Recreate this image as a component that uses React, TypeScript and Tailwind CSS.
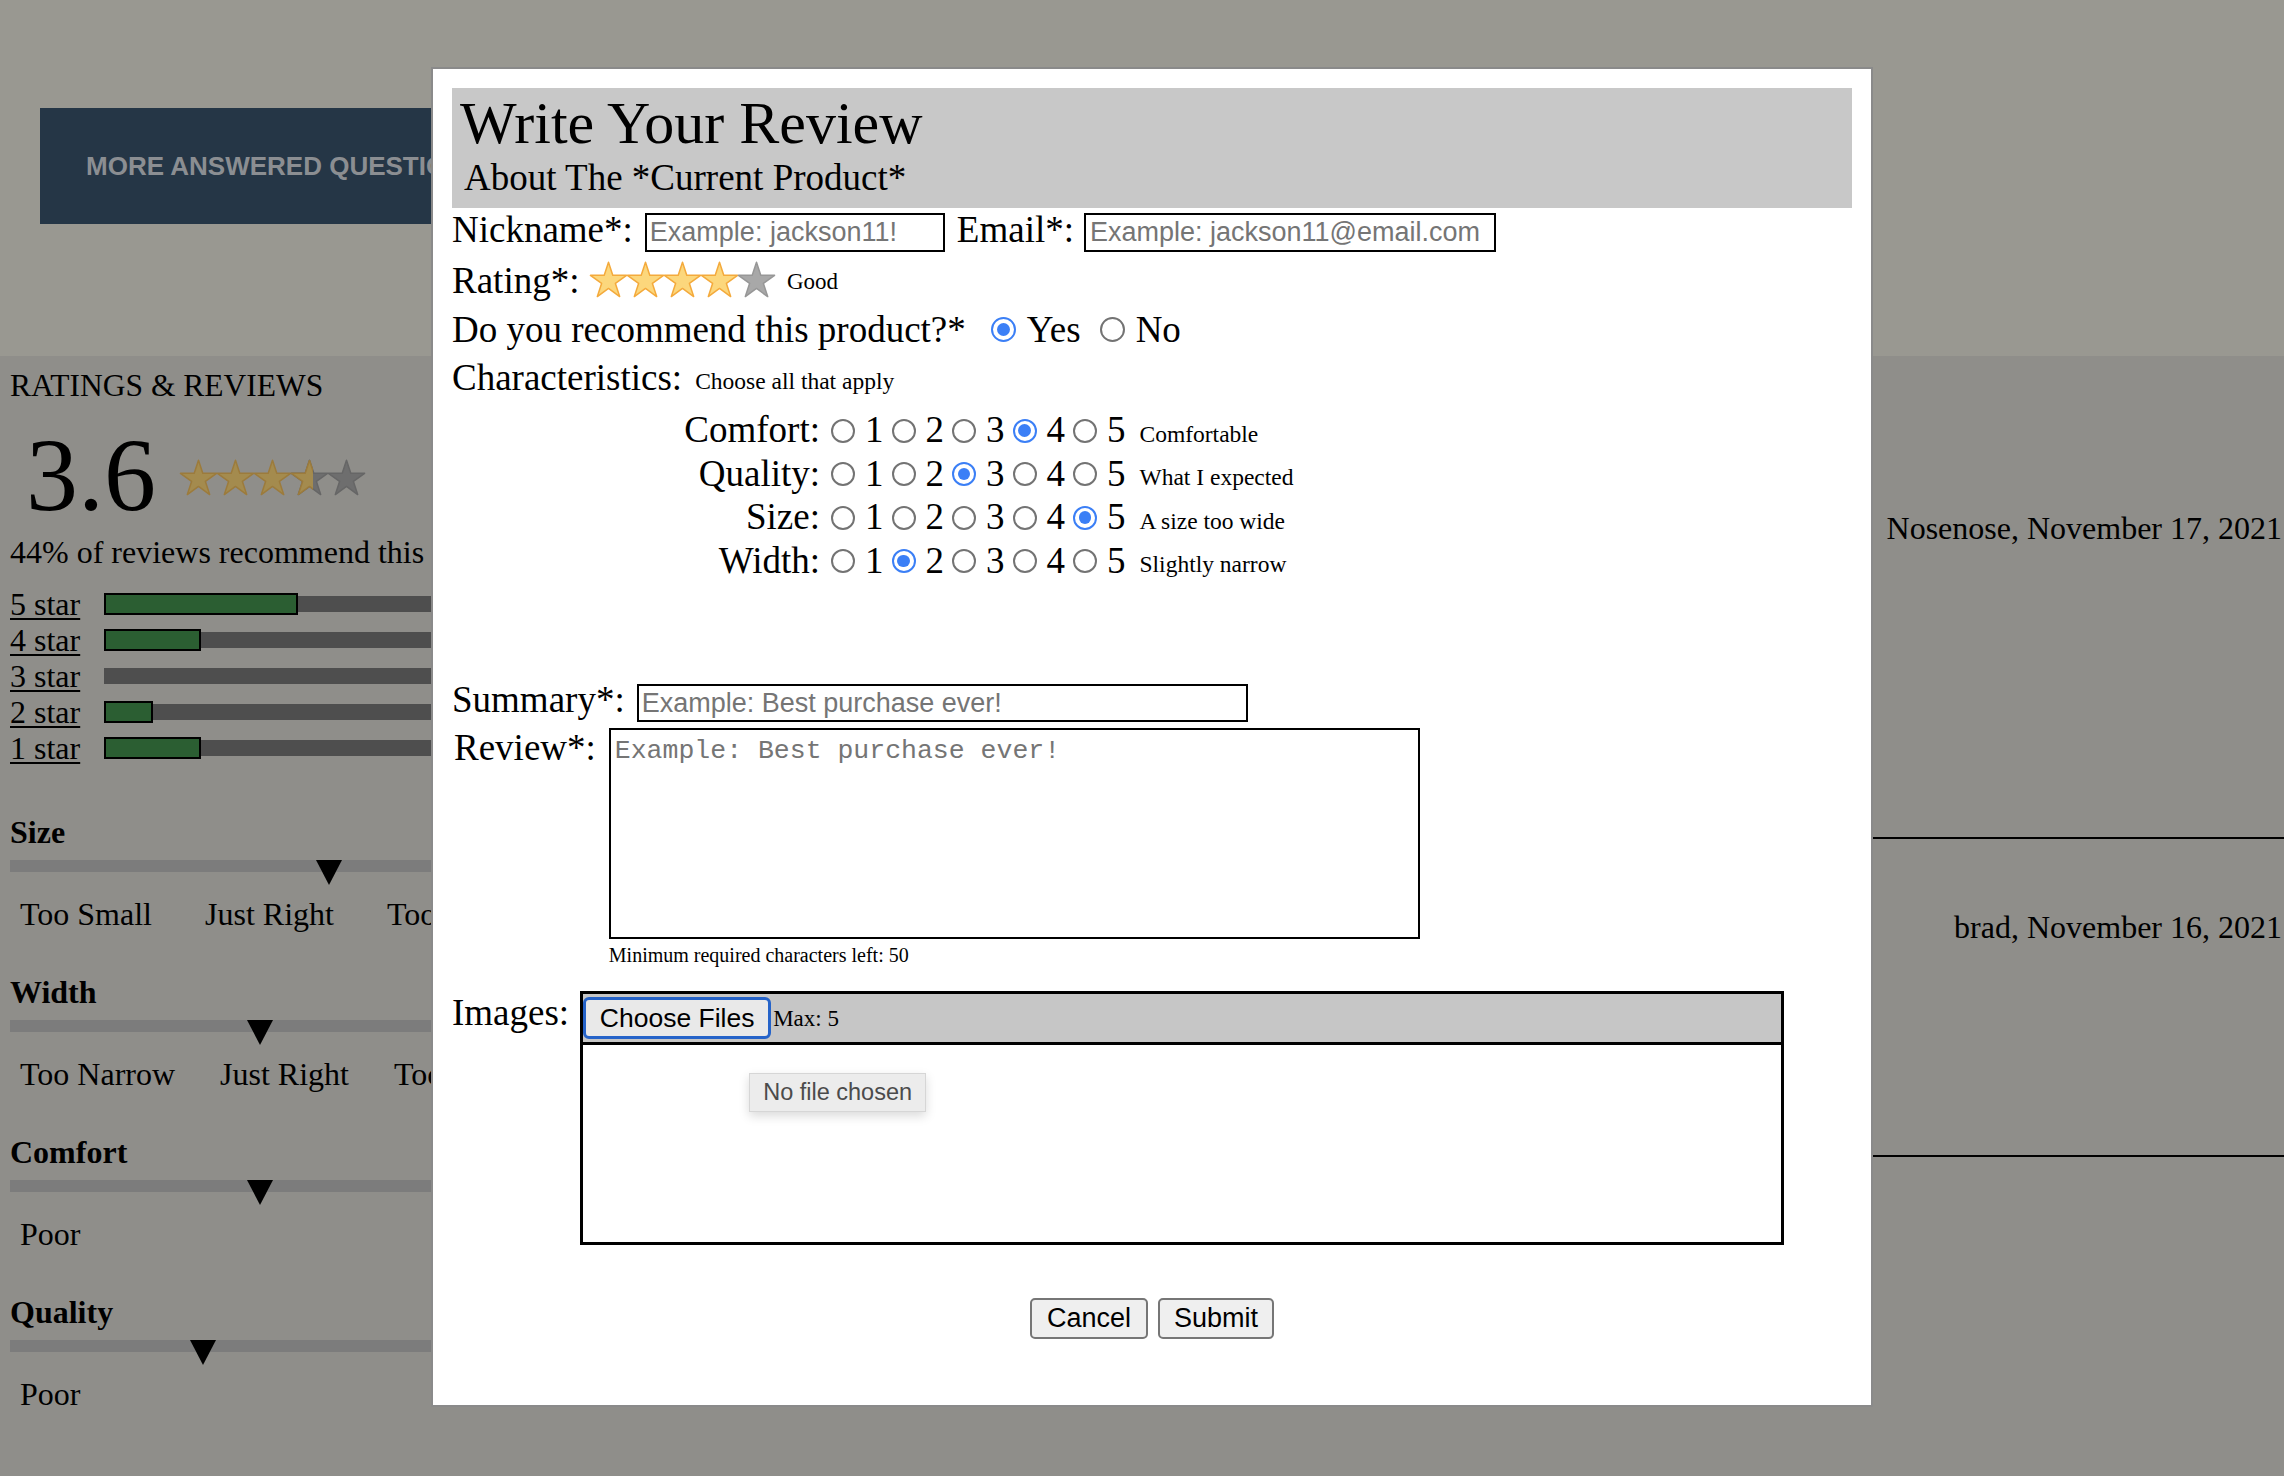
import React from 'react';

const ratingRows = [
  { label: '5 star', pct: 44.4 },
  { label: '4 star', pct: 22.2 },
  { label: '3 star', pct: 0 },
  { label: '2 star', pct: 11.1 },
  { label: '1 star', pct: 22.2 },
];

const fits = [
  { name: 'Size', pos: 306, labels: ['Too Small', 'Just Right', 'Too Large'], gap: 'gap-[53px]' },
  { name: 'Width', pos: 237, labels: ['Too Narrow', 'Just Right', 'Too Wide'], gap: 'gap-[45px]' },
  { name: 'Comfort', pos: 237, labels: ['Poor', 'Perfect'], gap: 'gap-[400px]' },
  { name: 'Quality', pos: 179.5, labels: ['Poor', 'Great'], gap: 'gap-[400px]' },
];

const characteristics = [
  { name: 'Comfort', value: 4, desc: 'Comfortable' },
  { name: 'Quality', value: 3, desc: 'What I expected' },
  { name: 'Size', value: 5, desc: 'A size too wide' },
  { name: 'Width', value: 2, desc: 'Slightly narrow' },
];

const STAR_POINTS =
  '18.5,0.2 22.77,13.33 36.57,13.33 25.4,21.44 29.67,34.57 18.5,26.46 7.33,34.57 11.6,21.44 0.43,13.33 14.23,13.33';

function Star({ fill, stroke }: { fill: string; stroke: string }) {
  return (
    <svg width="37" height="35" viewBox="0 0 37 35" className="block shrink-0 overflow-visible">
      <polygon points={STAR_POINTS} fill={fill} stroke={stroke} strokeWidth="1.5" strokeLinejoin="round" />
    </svg>
  );
}

function Radio({ checked, className }: { checked?: boolean; className: string }) {
  if (checked) {
    return (
      <span className={`flex shrink-0 items-center justify-center rounded-full border-[2.5px] border-[#3b7ff6] bg-white ${className}`}>
        <span className="h-[64%] w-[64%] rounded-full bg-[#3b7ff6]" />
      </span>
    );
  }
  return <span className={`block shrink-0 rounded-full border-2 border-[#737373] bg-white ${className}`} />;
}

function RatingsSummary() {
  return (
    <section className="w-[560px] shrink-0 pl-[10px] pt-[14px]">
      <h2 className="text-[31.5px] leading-none">RATINGS &amp; REVIEWS</h2>

      <div className="mt-[21.5px] flex items-start">
        <span className="ml-[16px] text-[104px] leading-none">3.6</span>
        <div className="ml-[24px] mt-[37px] flex">
          {[0, 1, 2].map((i) => (
            <Star key={i} fill="#a48b4e" stroke="#9c7b3c" />
          ))}
          <div className="relative h-[35px] w-[37px]">
            <Star fill="#6e6e6e" stroke="#666666" />
            <div className="absolute inset-y-0 left-0 overflow-hidden" style={{ width: '60%' }}>
              <Star fill="#a48b4e" stroke="#9c7b3c" />
            </div>
          </div>
          <Star fill="#6e6e6e" stroke="#666666" />
        </div>
      </div>

      <p className="mt-[9px] whitespace-nowrap text-[32px] leading-none">44% of reviews recommend this product</p>

      <div className="mt-[18px]">
        {ratingRows.map((row) => (
          <div key={row.label} className="flex h-[36px] items-center">
            <a className="w-[94px] text-[32px] leading-[36px] underline decoration-[2px] underline-offset-[3px]">
              {row.label}
            </a>
            <div className="relative flex h-[22px] w-[437px] items-center">
              <div className="h-[16px] w-full bg-[#4e4e4e]" />
              {row.pct > 0 && (
                <div
                  className="absolute left-0 top-0 h-[22px] border-2 border-black bg-[#2b5e32]"
                  style={{ width: `${row.pct}%` }}
                />
              )}
            </div>
          </div>
        ))}
      </div>

      <div className="mt-[50px]">
        {fits.map((f, i) => (
          <div key={f.name} className={i > 0 ? 'mt-[46px]' : ''}>
            <h3 className="text-[32px] font-bold leading-none">{f.name}</h3>
            <div className="relative mt-[12px] h-[25px] w-[540px]">
              <div className="mt-[11px] h-[12px] bg-[#7c7c7c]" />
              <svg
                width="26"
                height="25"
                viewBox="0 0 26 25"
                className="absolute top-0"
                style={{ left: f.pos }}
              >
                <polygon points="0,0 26,0 13,25" fill="#000" />
              </svg>
            </div>
            <div className={`mt-[13px] flex whitespace-nowrap pl-[10px] text-[32px] leading-none ${f.gap}`}>
              {f.labels.map((l) => (
                <span key={l}>{l}</span>
              ))}
            </div>
          </div>
        ))}
      </div>
    </section>
  );
}

function ReviewList() {
  return (
    <section className="min-w-0 flex-1 text-right text-[32px] leading-none">
      <div className="border-b-2 border-black pb-[293px] pr-[2px] pt-[156px]">Nosenose, November 17, 2021</div>
      <div className="border-b-2 border-black pb-[212px] pr-[2px] pt-[72px]">brad, November 16, 2021</div>
    </section>
  );
}

function ReviewModal() {
  return (
    <div className="absolute left-[431px] top-[67px] h-[1340px] w-[1442px] border-2 border-[#8a8a8a] bg-white px-[19px] pt-[19px]">
      {/* Header */}
      <div className="h-[120px] bg-[#c8c8c8]">
        <h1 className="pl-[8px] pt-[5px] text-[60px] font-normal leading-none">Write Your Review</h1>
        <h2 className="mt-[6px] pl-[12px] text-[37px] leading-none">About The *Current Product*</h2>
      </div>

      {/* Nickname / Email */}
      <div className="flex h-[54px] items-start text-[37px] leading-none">
        <label className="mt-[3px]">Nickname*:</label>
        <input
          placeholder="Example: jackson11!"
          className="ml-[12px] mt-[5px] h-[39px] w-[300px] border-2 border-black px-[3px] font-['Liberation_Sans',Arial,sans-serif] text-[27px] outline-none placeholder:text-[#757575]"
        />
        <label className="ml-[12px] mt-[3px]">Email*:</label>
        <input
          placeholder="Example: jackson11@email.com"
          className="ml-[10px] mt-[5px] h-[39px] w-[412px] border-2 border-black px-[4px] font-['Liberation_Sans',Arial,sans-serif] text-[27px] outline-none placeholder:text-[#757575]"
        />
      </div>

      {/* Rating */}
      <div className="flex h-[49px] items-start text-[37px] leading-none">
        <span>Rating*:</span>
        <div className="ml-[10.5px] flex">
          {[0, 1, 2, 3].map((i) => (
            <Star key={i} fill="#fcd77c" stroke="#f4aa3c" />
          ))}
          <Star fill="#a8a8a8" stroke="#979797" />
        </div>
        <span className="ml-[12px] mt-[8px] text-[23px]">Good</span>
      </div>

      {/* Recommend */}
      <div className="flex h-[48px] items-start text-[37px] leading-none">
        <span>Do you recommend this product?*</span>
        <Radio checked className="ml-[25px] mt-[6px] h-[25px] w-[25px]" />
        <span className="ml-[11px]">Yes</span>
        <Radio className="ml-[19px] mt-[6px] h-[25px] w-[25px]" />
        <span className="ml-[11px]">No</span>
      </div>

      {/* Characteristics */}
      <div className="flex h-[48.5px] items-start text-[37px] leading-none">
        <span>Characteristics:</span>
        <span className="ml-[13px] mt-[11px] text-[23.5px]">Choose all that apply</span>
      </div>

      <div>
        {characteristics.map((c) => (
          <div key={c.name} className="flex h-[43.5px] items-start text-[37px] leading-none">
            <span className="mt-[3.5px] w-[368px] text-right">{c.name}:</span>
            {[1, 2, 3, 4, 5].map((n) => (
              <div key={n} className={`flex items-start ${n === 1 ? 'ml-[11px]' : 'ml-[8px]'}`}>
                <Radio checked={n === c.value} className="mt-[11px] h-[24px] w-[24px]" />
                <span className="ml-[10px] mt-[3.5px]">{n}</span>
              </div>
            ))}
            <span className="ml-[14px] mt-[15px] text-[23.5px]">{c.desc}</span>
          </div>
        ))}
      </div>

      {/* Summary */}
      <div className="mt-[99.5px] flex h-[47px] items-start text-[37px] leading-none">
        <label>Summary*:</label>
        <input
          placeholder="Example: Best purchase ever!"
          className="ml-[12px] mt-[3px] h-[38px] w-[611px] border-2 border-black px-[3px] font-['Liberation_Sans',Arial,sans-serif] text-[27px] outline-none placeholder:text-[#757575]"
        />
      </div>

      {/* Review body */}
      <div className="flex items-start text-[37px] leading-none">
        <label className="ml-[2px] mt-[1px]">Review*:</label>
        <div className="ml-[13px]">
          <textarea
            placeholder="Example: Best purchase ever!"
            className="block h-[211px] w-[811px] resize-none border-2 border-black px-[4px] pt-[6px] font-['Liberation_Mono','Courier_New',monospace] text-[26.5px] leading-[30px] outline-none placeholder:text-[#757575]"
          />
          <p className="mt-[6px] text-[20px] leading-none">Minimum required characters left: 50</p>
        </div>
      </div>

      {/* Images */}
      <div className="mt-[26px] flex items-start text-[37px] leading-none">
        <span className="mt-[3px]">Images:</span>
        <div className="relative ml-[11px] h-[254px] w-[1204px] border-[3px] border-black">
          <div className="flex h-[51px] items-center border-b-[3px] border-black bg-[#c6c6c6]">
            <button className="h-[42px] w-[188px] rounded-[6px] border-[3px] border-[#2563c9] bg-[#e9e9e9] font-['Liberation_Sans',Arial,sans-serif] text-[26.5px] leading-none text-black">
              Choose Files
            </button>
            <span className="ml-[2px] text-[23px]">Max: 5</span>
          </div>
          <div className="absolute left-[166px] top-[79px] flex h-[39px] w-[177px] items-center justify-center border border-[#d6d6d6] bg-[#ececec] font-['Liberation_Sans',Arial,sans-serif] text-[23.5px] leading-none text-[#4b4b4b] shadow-[0_4px_10px_rgba(0,0,0,0.15)]">
            No file chosen
          </div>
        </div>
      </div>

      {/* Actions */}
      <div className="mt-[53px] flex justify-center gap-[10px] font-['Liberation_Sans',Arial,sans-serif] text-[27px] leading-none">
        <button className="h-[41px] rounded-[5px] border-2 border-[#767676] bg-[#efefef] px-[15px]">Cancel</button>
        <button className="h-[41px] rounded-[5px] border-2 border-[#767676] bg-[#efefef] px-[14px]">Submit</button>
      </div>
    </div>
  );
}

export default function App() {
  return (
    <div className="relative h-[1476px] w-[2284px] overflow-hidden bg-[#8f8e8a] font-['Liberation_Serif','Times_New_Roman',serif] text-black">
      <header className="flex h-[356px] items-start bg-[#999891] pl-[40px] pt-[108px]">
        <button className="flex h-[116px] w-[520px] items-center bg-[#253646] pl-[46px] font-['Liberation_Sans',Arial,sans-serif] text-[26px] font-bold text-[#8b8e92]">
          MORE ANSWERED QUESTIONS
        </button>
      </header>

      <main className="flex">
        <RatingsSummary />
        <ReviewList />
      </main>

      <ReviewModal />
    </div>
  );
}
